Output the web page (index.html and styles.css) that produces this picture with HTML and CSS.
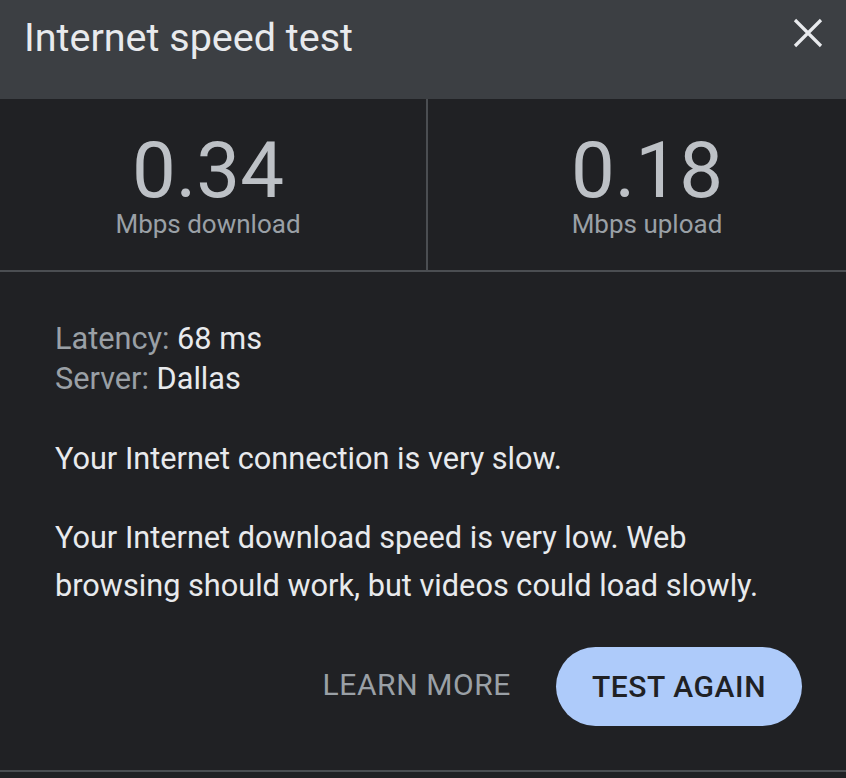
FILE: index.html
```html
<!DOCTYPE html>
<html lang="en">
<head>
    <meta charset="UTF-8">
    <meta name="viewport" content="width=device-width, initial-scale=1.0">
    <title>Internet speed test</title>
    <link rel="stylesheet" href="styles.css">
</head>
<body>

<div class="dialog">
    <div class="dialog-header">
        <h1 class="dialog-title">Internet speed test</h1>
        <button class="close-btn" aria-label="Close">
            <svg width="30" height="30" viewBox="0 0 30 30">
                <path d="M2 2 L28 28 M28 2 L2 28" stroke="#e8eaed" stroke-width="3.2" fill="none"/>
            </svg>
        </button>
    </div>

    <div class="stats">
        <div class="stat stat-down">
            <div class="stat-value">0.34</div>
            <div class="stat-label">Mbps download</div>
        </div>
        <div class="stat stat-up">
            <div class="stat-value">0.18</div>
            <div class="stat-label">Mbps upload</div>
        </div>
    </div>

    <div class="details">
        <div class="meta">
            <div><span class="meta-key">Latency:</span> 68 ms</div>
            <div><span class="meta-key">Server:</span> Dallas</div>
        </div>
        <p class="summary">Your Internet connection is very slow.</p>
        <p class="summary second">Your Internet download speed is very low. Web browsing should work, but videos could load slowly.</p>

        <div class="actions">
            <button class="btn btn-text">LEARN MORE</button>
            <button class="btn btn-pill">TEST AGAIN</button>
        </div>
    </div>
</div>

</body>
</html>
```

FILE: styles.css
```css
body {
    margin: 0;
    background: #202124;
    font-family: Roboto, "Liberation Sans", Arial, sans-serif;
    color: #e8eaed;
}
.dialog {
    background: #202124;
}
.dialog-header {
    display: flex;
    justify-content: space-between;
    align-items: flex-start;
    box-sizing: border-box;
    height: 99px;
    padding: 14px 23px 0 24px;
    background: #3c3f43;
}
.dialog-title {
    margin: 0;
    font-size: 39.5px;
    font-weight: 400;
    line-height: 48px;
    color: #e8eaed;
}
.close-btn {
    margin-top: 4px;
    padding: 0;
    border: none;
    background: none;
    width: 30px;
    height: 30px;
    cursor: pointer;
}
.close-btn svg {
    display: block;
}
.stats {
    display: grid;
    grid-template-columns: 428px 1fr;
    border-bottom: 2px solid #4b4e52;
}
.stat {
    text-align: center;
    padding: 34px 0 31px;
}
.stat-down {
    border-right: 2px solid #4b4e52;
    padding-right: 10px;
}
.stat-up {
    padding-left: 20px;
}
.stat-value {
    font-size: 78px;
    line-height: 76px;
    color: #bdc1c6;
}
.stat-label {
    font-size: 26px;
    line-height: 30px;
    color: #9aa0a6;
}
.details {
    padding: 47px 55px 44px;
    border-bottom: 2px solid #4b4e52;
}
.meta {
    font-size: 30.7px;
    line-height: 40px;
    color: #e8eaed;
}
.meta-key {
    color: #9aa0a6;
}
.summary {
    margin: 36px 0 0;
    font-size: 30.7px;
    line-height: 48px;
}
.summary.second {
    margin-top: 31px;
}
.actions {
    display: flex;
    justify-content: flex-end;
    align-items: center;
    gap: 45px;
    margin-top: 37px;
    margin-right: -11px;
}
.btn {
    font-family: Roboto, "Liberation Sans", Arial, sans-serif;
    font-size: 30px;
    border: none;
    cursor: pointer;
    letter-spacing: 0.6px;
}
.btn-text {
    background: none;
    color: #9aa0a6;
    padding: 0 0 4px;
}
.btn-pill {
    background: #aecbfa;
    color: #202124;
    font-weight: 500;
    height: 79px;
    width: 246px;
    border-radius: 40px;
    padding: 0;
}
```
